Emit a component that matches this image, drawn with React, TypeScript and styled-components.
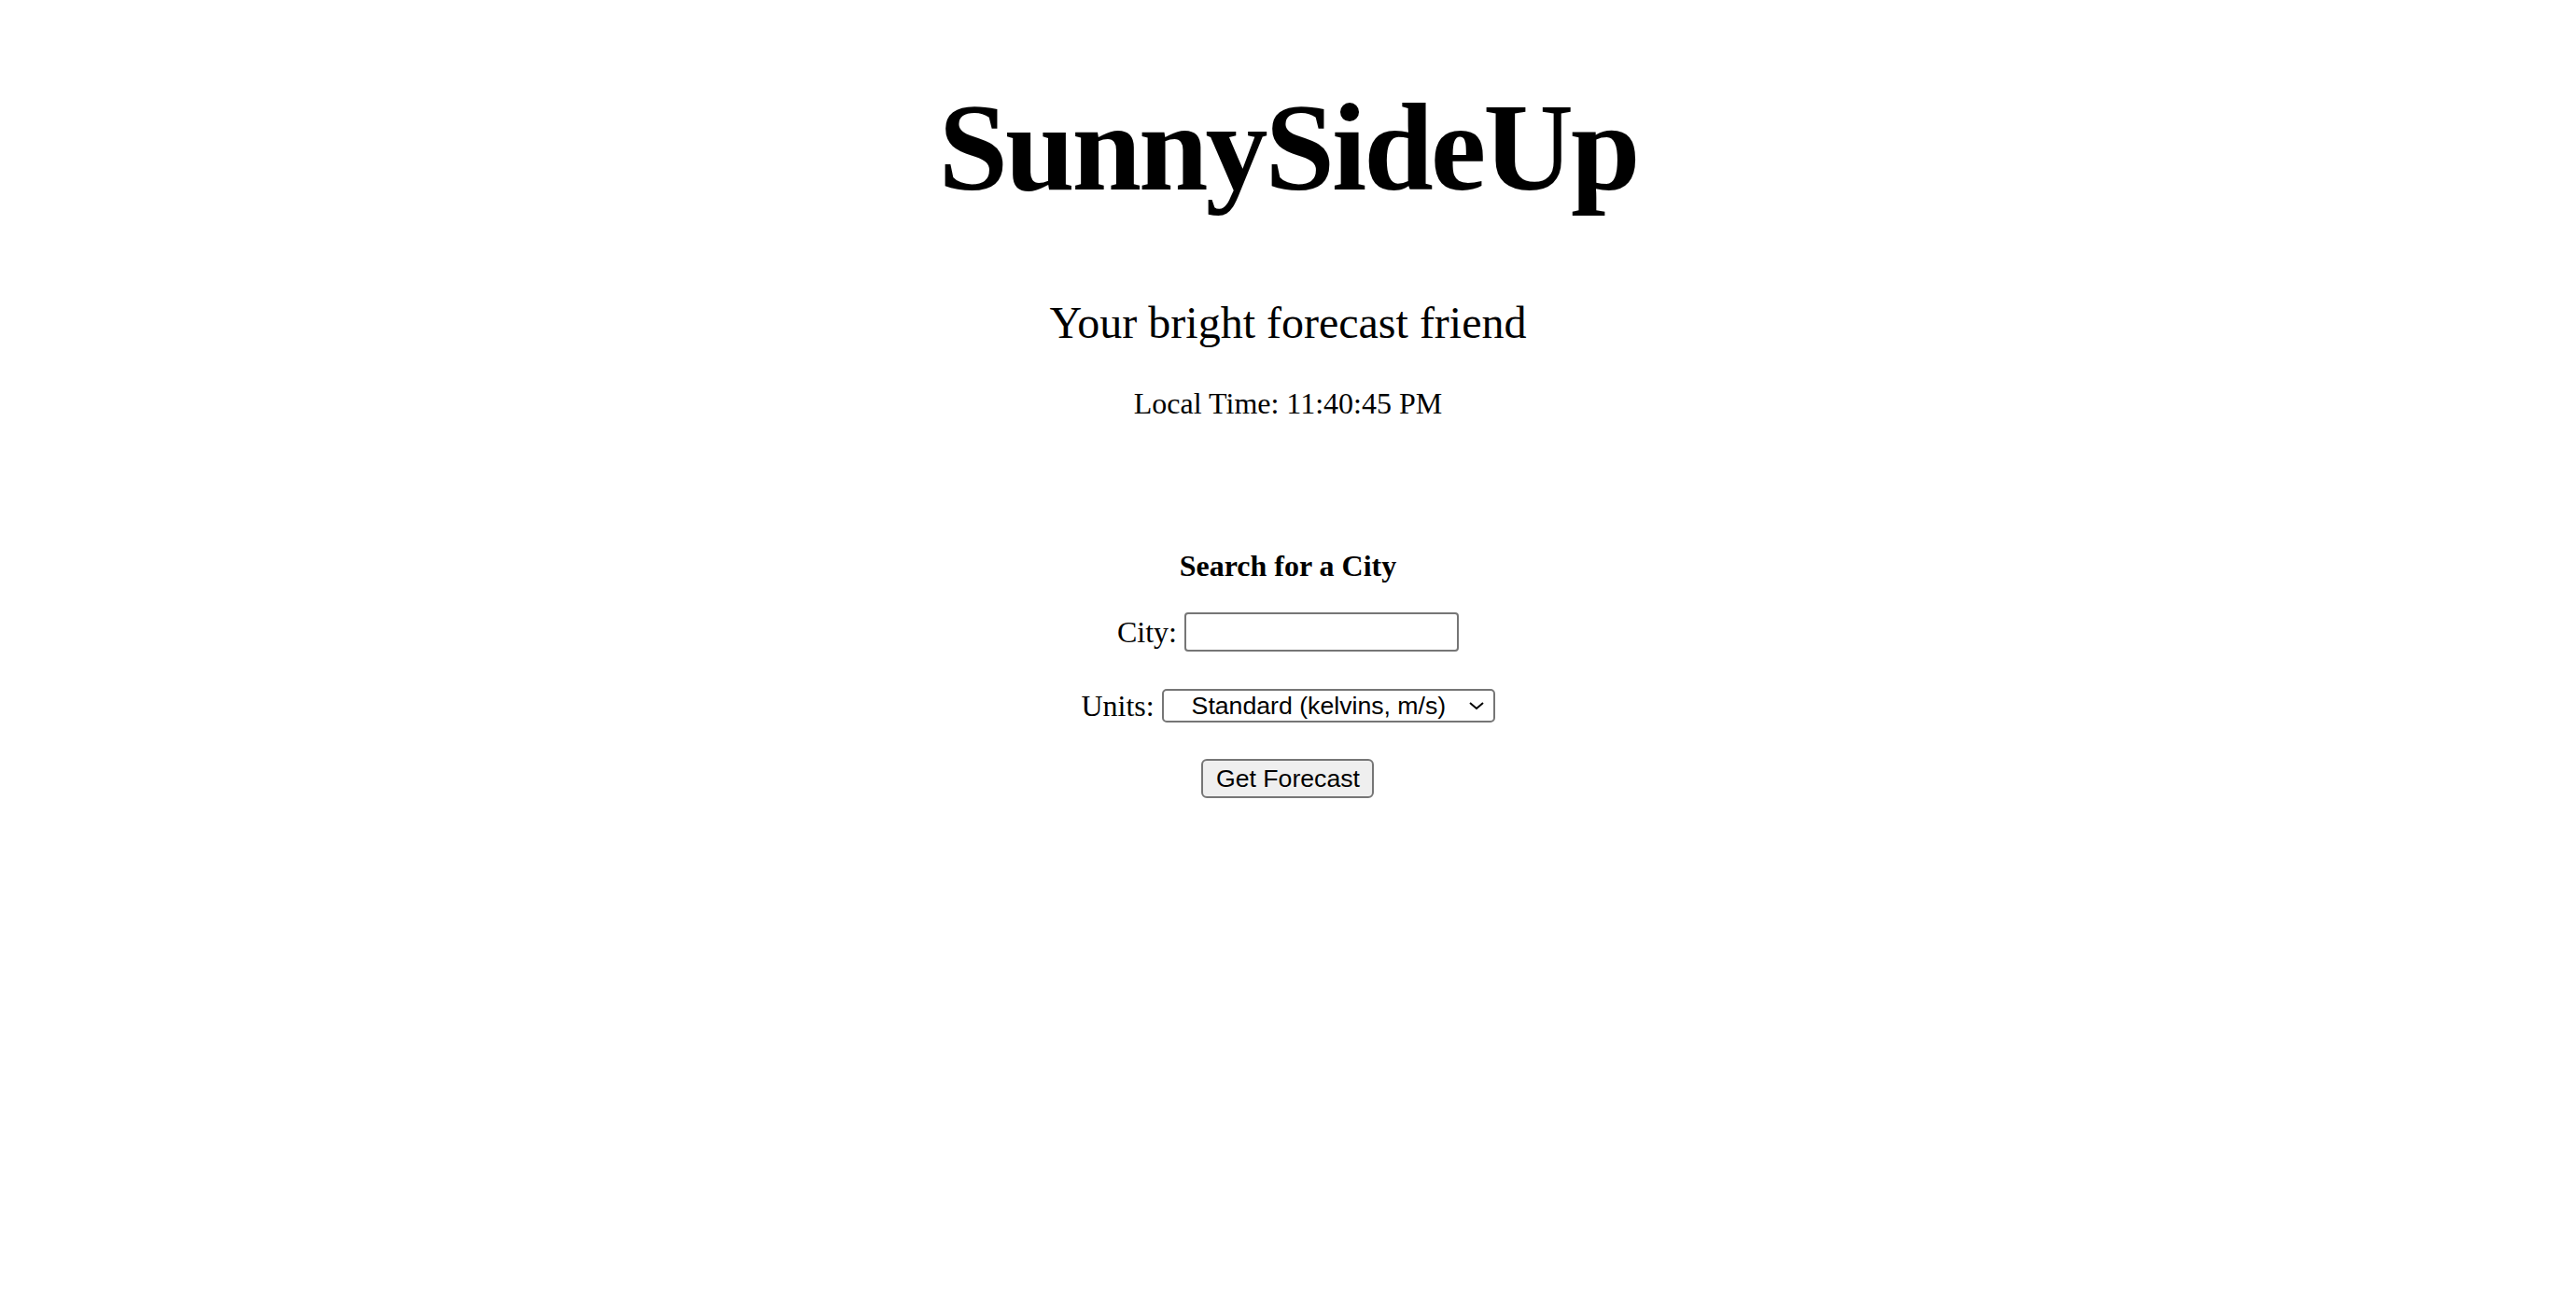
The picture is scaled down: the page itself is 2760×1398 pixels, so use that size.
import React from "react";
import styled, { createGlobalStyle } from "styled-components";

const GlobalStyle = createGlobalStyle`
  html, body {
    margin: 0;
    padding: 0;
    background: #ffffff;
    color: #000000;
    font-family: "Liberation Serif", "Times New Roman", serif;
  }
`;

const Page = styled.main`
  display: flex;
  flex-direction: column;
  align-items: center;
  text-align: center;
  padding-top: 94px;
`;

const Title = styled.h1`
  margin: 0;
  font-size: 134px;
  line-height: 128px;
  letter-spacing: -3px;
  font-weight: 700;
`;

const Subtitle = styled.h2`
  margin: 100px 0 0;
  font-size: 48px;
  line-height: 48px;
  font-weight: 400;
`;

const LocalTime = styled.p`
  margin: 46px 0 0;
  font-size: 32px;
  line-height: 32px;
`;

const SearchForm = styled.form`
  display: flex;
  flex-direction: column;
  align-items: center;
  margin-top: 142px;
`;

const SearchHeading = styled.h3`
  margin: 0;
  font-size: 32px;
  line-height: 32px;
  font-weight: 700;
`;

const FieldRow = styled.div<{ $top: number }>`
  display: flex;
  align-items: center;
  gap: 8px;
  margin-top: ${(p) => p.$top}px;
`;

const Label = styled.label`
  font-size: 32px;
  line-height: 32px;
`;

const TextInput = styled.input`
  box-sizing: border-box;
  width: 294px;
  height: 42px;
  border: 2px solid #767676;
  border-radius: 4px;
  padding: 2px 4px;
  font-family: "Liberation Sans", Arial, sans-serif;
  font-size: 26.67px;
  background: #ffffff;
  outline: none;
`;

const SelectWrap = styled.div`
  position: relative;
  display: flex;
`;

const Select = styled.select`
  box-sizing: border-box;
  appearance: none;
  -webkit-appearance: none;
  width: 357px;
  height: 36px;
  border: 2px solid #767676;
  border-radius: 5px;
  padding: 0 0 0 30px;
  font-family: "Liberation Sans", Arial, sans-serif;
  font-size: 26.67px;
  color: #000000;
  background: #ffffff;
  outline: none;
`;

const Chevron = styled.svg`
  position: absolute;
  right: 10px;
  top: 50%;
  transform: translateY(-50%);
  pointer-events: none;
`;

const SubmitButton = styled.button`
  box-sizing: border-box;
  margin-top: 39px;
  width: 185px;
  height: 42px;
  border: 2px solid #767676;
  border-radius: 6px;
  background: #efefef;
  font-family: "Liberation Sans", Arial, sans-serif;
  font-size: 26.67px;
  color: #000000;
  padding: 0;
`;

export default function App() {
  return (
    <>
      <GlobalStyle />
      <Page>
        <Title>SunnySideUp</Title>
        <Subtitle>Your bright forecast friend</Subtitle>
        <LocalTime>Local Time: 11:40:45 PM</LocalTime>
        <SearchForm onSubmit={(e) => e.preventDefault()}>
          <SearchHeading>Search for a City</SearchHeading>
          <FieldRow $top={34}>
            <Label htmlFor="city">City:</Label>
            <TextInput id="city" type="text" />
          </FieldRow>
          <FieldRow $top={40}>
            <Label htmlFor="units">Units:</Label>
            <SelectWrap>
              <Select id="units" defaultValue="standard">
                <option value="standard">Standard (kelvins, m/s)</option>
                <option value="metric">Metric (°C, m/s)</option>
                <option value="imperial">Imperial (°F, mph)</option>
              </Select>
              <Chevron width="20" height="12" viewBox="0 0 20 12">
                <polyline
                  points="3,3 10,9 17,3"
                  fill="none"
                  stroke="#000"
                  strokeWidth="2"
                />
              </Chevron>
            </SelectWrap>
          </FieldRow>
          <SubmitButton type="submit">Get Forecast</SubmitButton>
        </SearchForm>
      </Page>
    </>
  );
}
